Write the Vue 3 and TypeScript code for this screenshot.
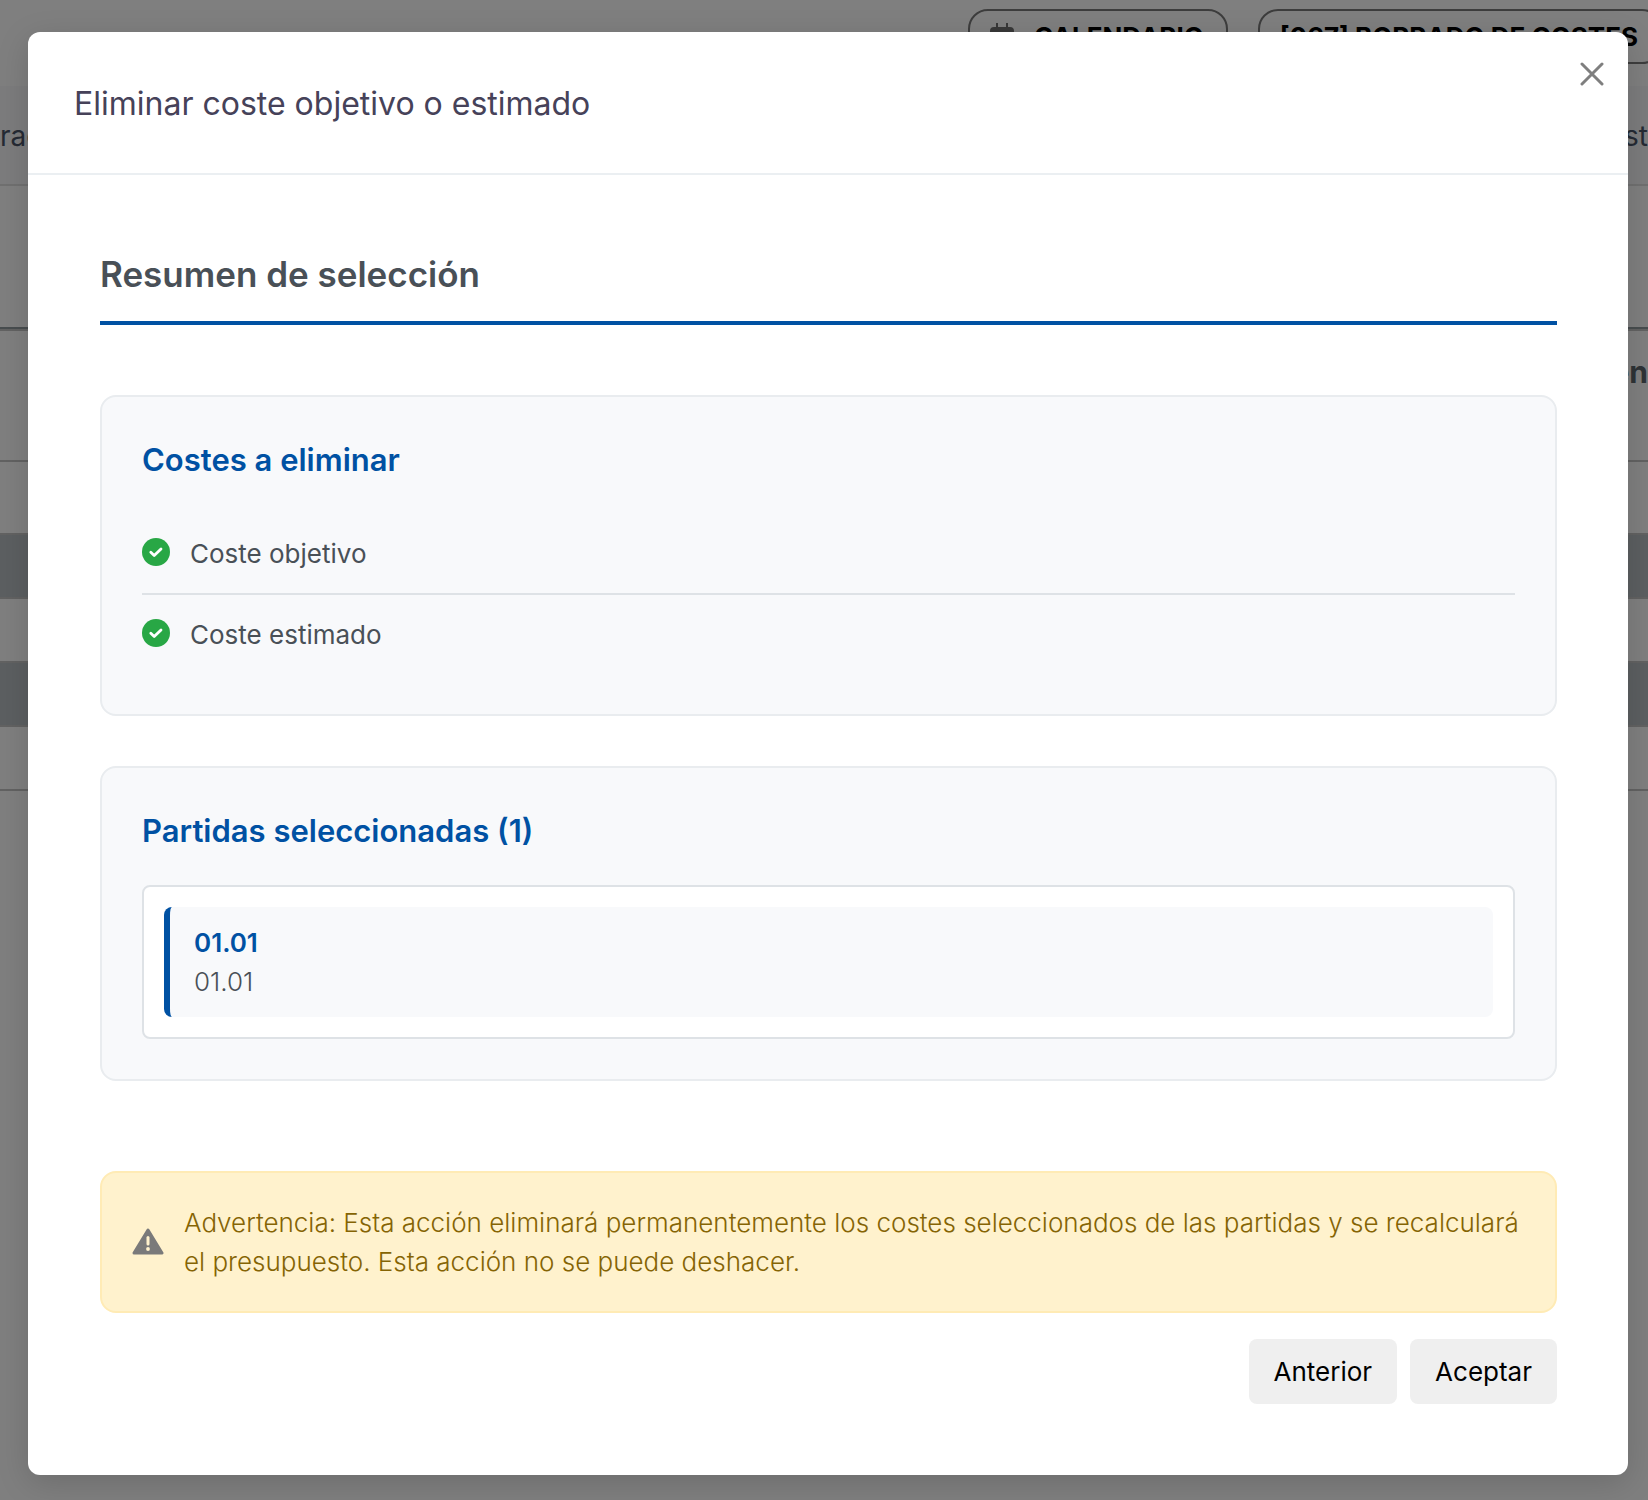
<script setup lang="ts">
interface CostType {
  id: string
  label: string
}
interface BudgetItem {
  code: string
  name: string
}

const costs: CostType[] = [
  { id: 'target', label: 'Coste objetivo' },
  { id: 'estimated', label: 'Coste estimado' },
]
const items: BudgetItem[] = [{ code: '01.01', name: '01.01' }]
</script>

<template>
  <div class="screen">
    <div class="page">
      <header class="topbar">
        <button type="button" class="pill">
          <svg class="calendar" viewBox="0 0 24 28" aria-hidden="true">
            <path fill="currentColor" d="M6 0h2v4h8V0h2v4h2a4 4 0 0 1 4 4v16a4 4 0 0 1-4 4H4a4 4 0 0 1-4-4V8a4 4 0 0 1 4-4h2z" />
          </svg>
          <span>CALENDARIO</span>
        </button>
        <button type="button" class="pill project">[067] BORRADO DE COSTES</button>
      </header>
      <nav class="tabs">
        <a href="#">rac</a>
        <a href="#">st</a>
      </nav>
      <table class="grid">
        <thead>
          <tr><th>en</th></tr>
        </thead>
        <tbody>
          <tr class="first"><td></td></tr>
          <tr class="group"><td></td></tr>
          <tr><td></td></tr>
          <tr class="group"><td></td></tr>
          <tr class="last"><td></td></tr>
        </tbody>
      </table>
    </div>

    <div class="backdrop">
      <section class="modal" role="dialog" aria-modal="true" aria-labelledby="modal-title">
        <header class="modal-header">
          <h1 id="modal-title">Eliminar coste objetivo o estimado</h1>
          <button type="button" class="close" aria-label="Cerrar">
            <svg viewBox="0 0 24 24" aria-hidden="true">
              <path d="M2 2l20 20M22 2L2 22" fill="none" stroke="#7f7f7f" stroke-width="3" stroke-linecap="round" />
            </svg>
          </button>
        </header>

        <div class="modal-body">
          <h2>Resumen de selección</h2>

          <section class="card">
            <h3>Costes a eliminar</h3>
            <ul class="costs">
              <li v-for="cost in costs" :key="cost.id">
                <svg class="check" viewBox="0 0 28 28" aria-hidden="true">
                  <circle cx="14" cy="14" r="14" fill="#28a745" />
                  <path d="M8.8 14.2l3.4 3.3 6.8-6.6" fill="none" stroke="#fff" stroke-width="2.8" stroke-linecap="round" stroke-linejoin="round" />
                </svg>
                <span>{{ cost.label }}</span>
              </li>
            </ul>
          </section>

          <section class="card">
            <h3>Partidas seleccionadas ({{ items.length }})</h3>
            <div class="items">
              <div v-for="item in items" :key="item.code" class="item">
                <strong>{{ item.code }}</strong>
                <span>{{ item.name }}</span>
              </div>
            </div>
          </section>

          <div class="warning" role="alert">
            <svg class="triangle" viewBox="0 0 32 28" aria-hidden="true">
              <path d="M16 2L30 25H2z" fill="#7a7a7a" stroke="#7a7a7a" stroke-width="3" stroke-linejoin="round" />
              <path d="M16 9.5v6.5" stroke="#fff2cd" stroke-width="3" stroke-linecap="round" />
              <circle cx="16" cy="21" r="1.9" fill="#fff2cd" />
            </svg>
            <p>
              Advertencia: Esta acción eliminará permanentemente los costes seleccionados de las
              partidas y se recalculará el presupuesto. Esta acción no se puede deshacer.
            </p>
          </div>

          <footer class="actions">
            <button type="button">Anterior</button>
            <button type="button">Aceptar</button>
          </footer>
        </div>
      </section>
    </div>
  </div>
</template>

<style>
body {
  margin: 0;
}
</style>

<style scoped>
* {
  box-sizing: border-box;
}
h1,
h2,
h3,
p,
ul {
  margin: 0;
  padding: 0;
}
button {
  border: 0;
  font: inherit;
  cursor: pointer;
}
.screen {
  display: grid;
  grid-template-columns: minmax(0, 1fr);
  min-height: 100vh;
  font-family: Inter, "Liberation Sans", sans-serif;
  font-size: 26px;
  line-height: 39px;
}
.page,
.backdrop {
  grid-area: 1 / 1;
}
.page {
  overflow: hidden;
  background: #fff;
}
.topbar {
  display: flex;
  justify-content: flex-end;
  gap: 30px;
  height: 86px;
  padding-top: 9px;
}
.pill {
  display: flex;
  align-items: center;
  gap: 20px;
  flex: none;
  height: 55px;
  padding: 0 22px 0 20px;
  border: 2px solid #7a7a7a;
  border-radius: 20px;
  background: transparent;
  color: #000;
  font-weight: 700;
  white-space: nowrap;
}
.calendar {
  width: 24px;
  height: 28px;
  color: #707070;
}
.project {
  margin-right: -14px;
}
.tabs {
  display: flex;
  align-items: center;
  justify-content: space-between;
  height: 100px;
  padding-top: 2px;
  border-bottom: 2px solid #e0e0e0;
  background: #f8f9fa;
}
.tabs a {
  color: #4a5568;
  font-size: 28px;
  text-decoration: none;
}
.grid {
  width: 100%;
  margin-top: 141px;
  border-collapse: separate;
  border-spacing: 0;
  border-top: 2px solid #909a9e;
  box-shadow: inset 0 2px 0 #c4c4c4;
}
.grid th {
  height: 133px;
  padding: 24px 0 0;
  border-bottom: 2px solid #c4c4c4;
  color: #5c666c;
  font-size: 30px;
  text-align: right;
  vertical-align: top;
}
.grid td {
  height: 62px;
  padding: 0;
}
.grid .first td {
  height: 71px;
}
.grid .group td {
  height: 66px;
  border: solid #c4c4c4;
  border-width: 2px 0;
  background: #b9bec2;
}
.grid .last td {
  height: 64px;
  border-bottom: 2px solid #c4c4c4;
}
.backdrop {
  position: relative;
  padding: 32px 20px 25px 28px;
  background: rgba(0, 0, 0, 0.5);
}
.modal {
  border-radius: 12px;
  background: #fff;
  box-shadow: 0 8px 32px rgba(0, 0, 0, 0.15);
}
.modal-header {
  display: flex;
  align-items: flex-start;
  justify-content: space-between;
  padding: 48px 20px 45px 46px;
  border-bottom: 2px solid #ebeff2;
}
h1 {
  color: #464259;
  font-size: 32px;
  font-weight: 400;
  line-height: 48px;
}
.close {
  width: 32px;
  height: 32px;
  margin-top: -22px;
  padding: 4px;
  background: transparent;
}
.close svg {
  display: block;
  width: 24px;
  height: 24px;
}
.modal-body {
  padding: 72px 71px 71px 72px;
}
h2 {
  margin-bottom: 70px;
  padding-bottom: 20px;
  border-bottom: 4px solid #0051a3;
  color: #495057;
  font-size: 35px;
  font-weight: 600;
  line-height: 54px;
}
.card {
  margin-bottom: 50px;
  padding: 40px;
  border: 2px solid #e9ecef;
  border-radius: 16px;
  background: #f8f9fb;
}
h3 {
  margin-bottom: 31px;
  color: #0051a3;
  font-size: 31px;
  font-weight: 600;
  line-height: 46px;
}
.costs {
  list-style: none;
}
.costs li {
  display: flex;
  align-items: center;
  gap: 20px;
  padding: 20px 0;
  color: #495057;
}
.costs li + li {
  border-top: 2px solid #dee2e6;
}
.check {
  width: 28px;
  height: 28px;
  margin-bottom: 3px;
}
.items {
  padding: 20px;
  border: 2px solid #dee2e6;
  border-radius: 8px;
  background: #fff;
}
.item {
  display: flex;
  flex-direction: column;
  padding: 16px 24px;
  border-left: 6px solid #0051a3;
  border-radius: 8px;
  background: #f8f9fb;
}
.item strong {
  color: #0051a3;
  font-weight: 600;
}
.item span {
  color: #495057;
  font-weight: 300;
}
.warning {
  display: flex;
  align-items: center;
  gap: 20px;
  margin-top: 90px;
  padding: 30px;
  border: 2px solid #ffebb5;
  border-radius: 16px;
  background: #fff2cd;
  color: #856404;
  font-weight: 300;
}
.triangle {
  flex: none;
  width: 32px;
  height: 28px;
}
.actions {
  display: flex;
  justify-content: flex-end;
  gap: 13px;
  margin-top: 26px;
}
.actions button {
  height: 65px;
  padding: 0 25px;
  border-radius: 8px;
  background: #efefef;
  color: #000;
}
</style>
